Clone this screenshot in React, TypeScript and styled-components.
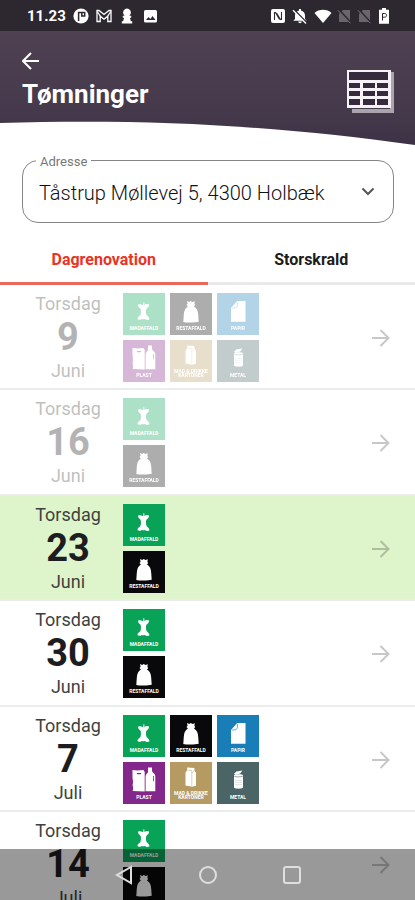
import React, { useState } from "react";
import styled, { createGlobalStyle } from "styled-components";

const GlobalStyle = createGlobalStyle`
  *, *::before, *::after { box-sizing: border-box; }
  body { margin: 0; background: #fff; font-family: Roboto, "Liberation Sans", sans-serif; }
  button, select { font: inherit; color: inherit; margin: 0; padding: 0; border: 0; background: none; }
  svg { display: block; }
`;

const Screen = styled.div`
  display: flex;
  flex-direction: column;
  height: 100vh;
  overflow: hidden;
`;

const StatusBar = styled.div`
  display: flex;
  justify-content: space-between;
  align-items: center;
  height: 31px;
  padding: 0 24px 0 27px;
  background: #2d2830;
  color: #fff;
  flex: none;
`;

const StatusGroup = styled.div<{ $gap: number }>`
  display: flex;
  align-items: center;
  gap: ${(p) => p.$gap}px;
`;

const Time = styled.span`
  font-size: 15px;
  line-height: 18px;
  font-weight: 700;
`;

const Header = styled.header`
  flex: none;
  background: linear-gradient(#4f4152, #43384a 80%, #3d3145);
`;

const HeaderContent = styled.div`
  display: flex;
  justify-content: space-between;
  align-items: flex-start;
  height: 84px;
  padding: 20px 20px 0 22px;
  color: #fff;
`;

const TitleBlock = styled.div`
  display: flex;
  flex-direction: column;
  align-items: flex-start;
  gap: 5px;
`;

const IconButton = styled.button`
  display: block;
  cursor: pointer;
`;

const Title = styled.h1`
  margin: 0;
  font-size: 26px;
  line-height: 36px;
  font-weight: 700;
`;

const Curve = styled.svg`
  width: 100%;
  height: 30px;
`;

const AddressField = styled.div`
  position: relative;
  flex: none;
  margin: 15px 21px 0 22px;
  height: 63px;
  border: 1px solid #858585;
  border-radius: 16px;
`;

const AddressLabel = styled.label`
  position: absolute;
  top: -7px;
  left: 13px;
  padding: 0 4px;
  background: #fff;
  color: #777;
  font-size: 13px;
  line-height: 16px;
`;

const AddressSelect = styled.select`
  width: 100%;
  height: 100%;
  padding: 2px 44px 0 16px;
  appearance: none;
  outline: none;
  color: #111;
  font-size: 20px;
  font-weight: 300;
`;

const Chevron = styled.svg`
  position: absolute;
  right: 18px;
  top: 23px;
  pointer-events: none;
`;

const Tabs = styled.div`
  display: flex;
  flex: none;
  margin-top: 10px;
`;

const Tab = styled.button<{ $active: boolean }>`
  flex: 1;
  height: 52px;
  padding-top: 4px;
  border-bottom: 3px solid ${(p) => (p.$active ? "#e8695c" : "#e9e9e9")};
  color: ${(p) => (p.$active ? "#ea3323" : "#1c1c1c")};
  font-size: 16px;
  line-height: 20px;
  font-weight: 700;
  cursor: pointer;
`;

const List = styled.ul`
  flex: 1;
  min-height: 0;
  margin: 0;
  padding: 0;
  list-style: none;
  overflow-y: auto;
  scrollbar-width: none;
`;

const Item = styled.li<{ $today: boolean }>`
  height: 105px;
  border-bottom: 2px solid #ececec;
  background: ${(p) => (p.$today ? "#def5cb" : "#fff")};
  &:nth-child(even) { height: 106px; }
`;

const RowButton = styled.button<{ $past: boolean }>`
  display: flex;
  width: 100%;
  height: 100%;
  padding: 8px 24px 0 22px;
  text-align: center;
  cursor: pointer;
  & > :not(:last-child) { opacity: ${(p) => (p.$past ? 0.33 : 1)}; }
`;

const DateColumn = styled.div`
  display: flex;
  flex-direction: column;
  width: 92px;
  margin-right: 9px;
`;

const DateText = styled.span`
  font-size: 18px;
  line-height: 22px;
  color: #3e423e;
`;

const DayNumber = styled.span`
  font-size: 38px;
  line-height: 45px;
  font-weight: 700;
  color: #1d1c20;
`;

const Tiles = styled.div`
  display: grid;
  grid-template-columns: repeat(3, 42px);
  grid-auto-rows: 42px;
  gap: 5px;
  align-content: start;
  flex: 1;
`;

const Tile = styled.div<{ $color: string }>`
  position: relative;
  background: ${(p) => p.$color};
`;

const TileLabel = styled.span`
  position: absolute;
  left: 0;
  right: 0;
  bottom: 5px;
  color: #fff;
  font-size: 5px;
  line-height: 4px;
  font-weight: 700;
  white-space: pre-line;
`;

const Arrow = styled.svg`
  align-self: center;
  margin-bottom: 6px;
`;

const NavBar = styled.nav`
  position: fixed;
  left: 0;
  right: 0;
  bottom: 0;
  display: flex;
  justify-content: center;
  align-items: center;
  gap: 60px;
  height: 51px;
  background: rgba(0, 0, 0, 0.4);
`;

type Kind = "food" | "rest" | "paper" | "plastic" | "carton" | "metal";

const kinds: Record<Kind, { color: string; label: string; art: React.ReactNode }> = {
  food: {
    color: "#09a357",
    label: "MADAFFALD",
    art: (
      <path d="M20.3 9.2l1 .1.1 2.7c1.6-1.4 3.3-1.2 4.7-.4-.1 2-1 3-2.7 4.1-.8 2.2-.5 4.8.3 6.6 1.3 1.1 2.6 2.1 2.8 4-1.9 1.200-3.400.400-4.600-.4-1.100.5-2 .5-3.100 0-1.400 1-2.900 1.300-4.400.2.3-1.800 1.600-2.800 2.900-3.800.8-2.100 1-4.800.1-6.800-1.400-1-2.300-2.100-2.400-3.800 1.800-.9 3.400-.4 4.900.6.7-.8.7-1.800.4-3.100z" />
    ),
  },
  rest: {
    color: "#09090b",
    label: "RESTAFFALD",
    art: (
      <path d="M17 8l2.200.9L20.700 8l1.800.9 2.300-.7-.4 2.700.8 1.100-1.200 1.500c2.900 1.500 4 4.600 4.200 8.200l.5 7c-3 1-12.500 1-15.400.2l.5-7.200c.3-3.600 1.300-6.600 4.100-8.200l-1.400-1.500 1.100-1.200z" />
    ),
  },
  paper: {
    color: "#197db7",
    label: "PAPIR",
    art: (
      <>
        <path d="M20.2 8h8.3v20.800H14V15z" />
        <path d="M20.300 9.200c.8 2.600-.2 4.300-1 5.100-1.200.8-2.500.7-4.200.7" fill="none" stroke="#197db7" strokeWidth=".7" />
      </>
    ),
  },
  plastic: {
    color: "#84278a",
    label: "PLAST",
    art: (
      <>
        <path d="M9.500 8.100c3.800.7 7.400.4 11-.1l1.200 2v19.400l-12.100-.3c1-2.300.5-3.800-.1-6 1-3.100.3-5.200 0-7.200z" />
        <path d="M25 5.400h4v3.700l1 1.600c1.700 1 2.300 2.200 2.300 4.200v14.300h-9.700V15c0-1.800.8-3.300 2.400-4.800z" />
        <path d="M13.500 11h5l-1 1.200h-3zM30 14h.8v5.200H30z" fill="#84278a" />
      </>
    ),
  },
  carton: {
    color: "#b59b62",
    label: "MAD & DRIKKE\nKARTONER",
    art: (
      <>
        <path d="M17 5.500l7.400.5.1 2.700 1.500 2.100v13l-4 1-6.500-1.200V10.400L17.200 8z" />
        <path d="M17.300 8l4.500.7v15.600M21.800 11l2.300-2.300" fill="none" stroke="#c8b487" strokeWidth=".6" />
      </>
    ),
  },
  metal: {
    color: "#4b6466",
    label: "METAL",
    art: (
      <>
        <path d="M17 13.200c0-1.200 9-1.200 9 0v12.300c-1 1.600-8 1.600-9 0z" />
        <path d="M17 11.800l2.400-2.300 6-.9-2.200 3-4.500 1.200z" />
        <path d="M17.300 14.300c2 .8 6.300.8 8.400 0" fill="none" stroke="#4b6466" strokeWidth=".6" />
        <path d="M18 18.100c2 .6 5 .6 7 0M18 20.200c2 .6 5 .6 7 0M18 22.300c2 .6 5 .6 7 0" fill="none" stroke="#b4bfc0" strokeWidth=".5" />
      </>
    ),
  },
};

interface Pickup {
  day: string;
  month: string;
  kinds: Kind[];
  past?: boolean;
  today?: boolean;
}

const all: Kind[] = ["food", "rest", "paper", "plastic", "carton", "metal"];
const weekly: Kind[] = ["food", "rest"];

const pickups: Pickup[] = [
  { day: "9", month: "Juni", kinds: all, past: true },
  { day: "16", month: "Juni", kinds: weekly, past: true },
  { day: "23", month: "Juni", kinds: weekly, today: true },
  { day: "30", month: "Juni", kinds: weekly },
  { day: "7", month: "Juli", kinds: all },
  { day: "14", month: "Juli", kinds: weekly },
];

const WasteTile = ({ kind }: { kind: Kind }) => (
  <Tile $color={kinds[kind].color}>
    <svg width="42" height="42" viewBox="0 0 42 42" fill="#fff" aria-hidden="true">
      {kinds[kind].art}
    </svg>
    <TileLabel>{kinds[kind].label}</TileLabel>
  </Tile>
);

const PickupRow = ({ item }: { item: Pickup }) => {
  const cells = item.kinds.length > 2 ? item.kinds : [item.kinds[0], null, null, item.kinds[1]];
  return (
    <Item $today={!!item.today}>
      <RowButton $past={!!item.past}>
        <DateColumn>
          <DateText>Torsdag</DateText>
          <DayNumber>{item.day}</DayNumber>
          <DateText>{item.month}</DateText>
        </DateColumn>
        <Tiles>
          {cells.map((kind, i) => (kind ? <WasteTile key={i} kind={kind} /> : <span key={i} />))}
        </Tiles>
        <Arrow width="20" height="20" viewBox="0 0 20 20" fill="none" stroke="#000" strokeOpacity=".22" strokeWidth="2" aria-hidden="true">
          <path d="M1 10h16M9.500 2l8 8-8 8" />
        </Arrow>
      </RowButton>
    </Item>
  );
};

const StatusIcons = () => (
  <>
    <StatusGroup $gap={7}>
      <Time>11.23</Time>
      <svg width="16" height="16" viewBox="0 0 16 16">
        <circle cx="8" cy="8" r="7.6" fill="#fff" />
        <path d="M5.600 13V4.400h3.100M8.800 4.400v3.700h2.900V4.400z" fill="none" stroke="#2d2830" strokeWidth="1.5" />
      </svg>
      <svg width="16" height="16" viewBox="0 0 16 16" fill="none" stroke="#fff" strokeWidth="1.3">
        <path d="M1 13.500v-11h2l5 4 5-4h2v11h-3.200V8.200L8 11.200 4.200 8.200v5.300z" />
        <path d="M1.200 3.500L4.200 8M14.800 3.500L11.800 8" />
      </svg>
      <svg width="16" height="16" viewBox="0 0 16 16" fill="#fff">
        <path d="M8 .5a4 4 0 0 1 3.500 5.800l-1.100 1.500h1.800v2h-1.300l1 3.400h1.300v2.300H2.800v-2.300h1.300l1-3.400H3.800v-2h1.800L4.500 6.300A4 4 0 0 1 8 .5z" />
      </svg>
      <svg width="16" height="16" viewBox="0 0 16 16">
        <rect x="2" y="2" width="13" height="12.5" rx="1.5" fill="#fff" />
        <path d="M4 12l2.500-3 2 2 2-3 3 4z" fill="#2d2830" />
      </svg>
    </StatusGroup>
    <StatusGroup $gap={5}>
      <svg width="16" height="16" viewBox="0 0 16 16">
        <rect x="1" y="1" width="14" height="14" rx="2" fill="#fff" />
        <path d="M4.500 12V4.500h1l4 7M11.500 4v7.500h-1L6.500 5" fill="none" stroke="#2d2830" strokeWidth="1.1" />
      </svg>
      <svg width="18" height="16" viewBox="0 0 18 16">
        <path d="M8 1h2v1.400c2.500.6 4 2.600 4 5.100v3.500l1.700 1.700H2.300L4 11V7.500c0-2.500 1.500-4.500 4-5.100zM7.200 13.500h3.600c0 2.200-3.600 2.200-3.600 0z" fill="#fff" />
        <path d="M3.200 1.700l13 13.300" stroke="#2d2830" strokeWidth="1.5" />
        <path d="M2 2.200l13 13.300" stroke="#fff" strokeWidth="1.3" />
      </svg>
      <svg width="18" height="16" viewBox="0 0 18 16" fill="#fff">
        <path d="M.5 5C5 .8 13 .8 17.500 5L9 15z" />
      </svg>
      {[0, 1].map((n) => (
        <svg key={n} width="15" height="16" viewBox="0 0 15 16">
          <path d="M6 2h7v12H2V6z" fill="#6a646c" />
          <path d="M1.500 1.500l12.500 13.500" stroke="#2d2830" strokeWidth="2" />
          <path d="M.8 2.200l12.500 13" stroke="#7b757d" strokeWidth="1" />
        </svg>
      ))}
      <svg width="14" height="16" viewBox="0 0 14 16">
        <path d="M5 0h4v1.700h3v14H2v-14h3z" fill="#fff" />
        <path d="M5.500 12.500v-7h2.200c2.500 0 2.500 3.700 0 3.700H5.500" fill="none" stroke="#2d2830" strokeWidth="1" />
      </svg>
    </StatusGroup>
  </>
);

export default function App() {
  const [tab, setTab] = useState("Dagrenovation");
  return (
    <Screen>
      <GlobalStyle />
      <StatusBar>
        <StatusIcons />
      </StatusBar>
      <Header>
        <HeaderContent>
          <TitleBlock>
            <IconButton aria-label="Tilbage">
              <svg width="20" height="20" viewBox="0 0 20 20" fill="none" stroke="#fff" strokeWidth="2">
                <path d="M17 10H1M9 2l-8 8 8 8" />
              </svg>
            </IconButton>
            <Title>Tømninger</Title>
          </TitleBlock>
          <IconButton aria-label="Kalender">
            <svg width="48" height="64" viewBox="0 0 48 64">
              <path d="M43 21h4v41H5v-4h38z" fill="#aaa4ad" />
              <path d="M0 19h44v38H0z" fill="#f6f2f7" />
              <path d="M2 21h39v8H2zM2 32h11v5H2zM16 32h12v5H16zM30 32h11v5H30zM2 40h11v5H2zM16 40h12v5H16zM30 40h11v5H30zM2 48h11v6H2zM16 48h12v6H16zM30 48h11v6H30z" fill="#352b3d" />
            </svg>
          </IconButton>
        </HeaderContent>
        <Curve viewBox="0 0 415 30" preserveAspectRatio="none" aria-hidden="true">
          <path d="M0 8C150 4 270 10 415 30V31H0z" fill="#fff" />
        </Curve>
      </Header>
      <AddressField>
        <AddressLabel htmlFor="address">Adresse</AddressLabel>
        <AddressSelect id="address">
          <option>Tåstrup Møllevej 5, 4300 Holbæk</option>
        </AddressSelect>
        <Chevron width="14" height="14" viewBox="0 0 14 14" fill="none" stroke="#555" strokeWidth="2">
          <path d="M1.500 4.500L7 10l5.500-5.500" />
        </Chevron>
      </AddressField>
      <Tabs role="tablist">
        {["Dagrenovation", "Storskrald"].map((name) => (
          <Tab key={name} role="tab" aria-selected={tab === name} $active={tab === name} onClick={() => setTab(name)}>
            {name}
          </Tab>
        ))}
      </Tabs>
      <List>
        {pickups.map((item) => (
          <PickupRow key={item.day + item.month} item={item} />
        ))}
      </List>
      <NavBar>
        <IconButton aria-label="Forrige">
          <svg width="24" height="24" viewBox="0 0 24 24" fill="none" stroke="#dedede" strokeWidth="2">
            <path d="M19 4v16L5 12z" />
          </svg>
        </IconButton>
        <IconButton aria-label="Hjem">
          <svg width="24" height="24" viewBox="0 0 24 24" fill="none" stroke="#dedede" strokeWidth="2">
            <circle cx="12" cy="12" r="8" />
          </svg>
        </IconButton>
        <IconButton aria-label="Oversigt">
          <svg width="24" height="24" viewBox="0 0 24 24" fill="none" stroke="#dedede" strokeWidth="2">
            <rect x="4" y="4" width="16" height="16" rx="2" />
          </svg>
        </IconButton>
      </NavBar>
    </Screen>
  );
}
